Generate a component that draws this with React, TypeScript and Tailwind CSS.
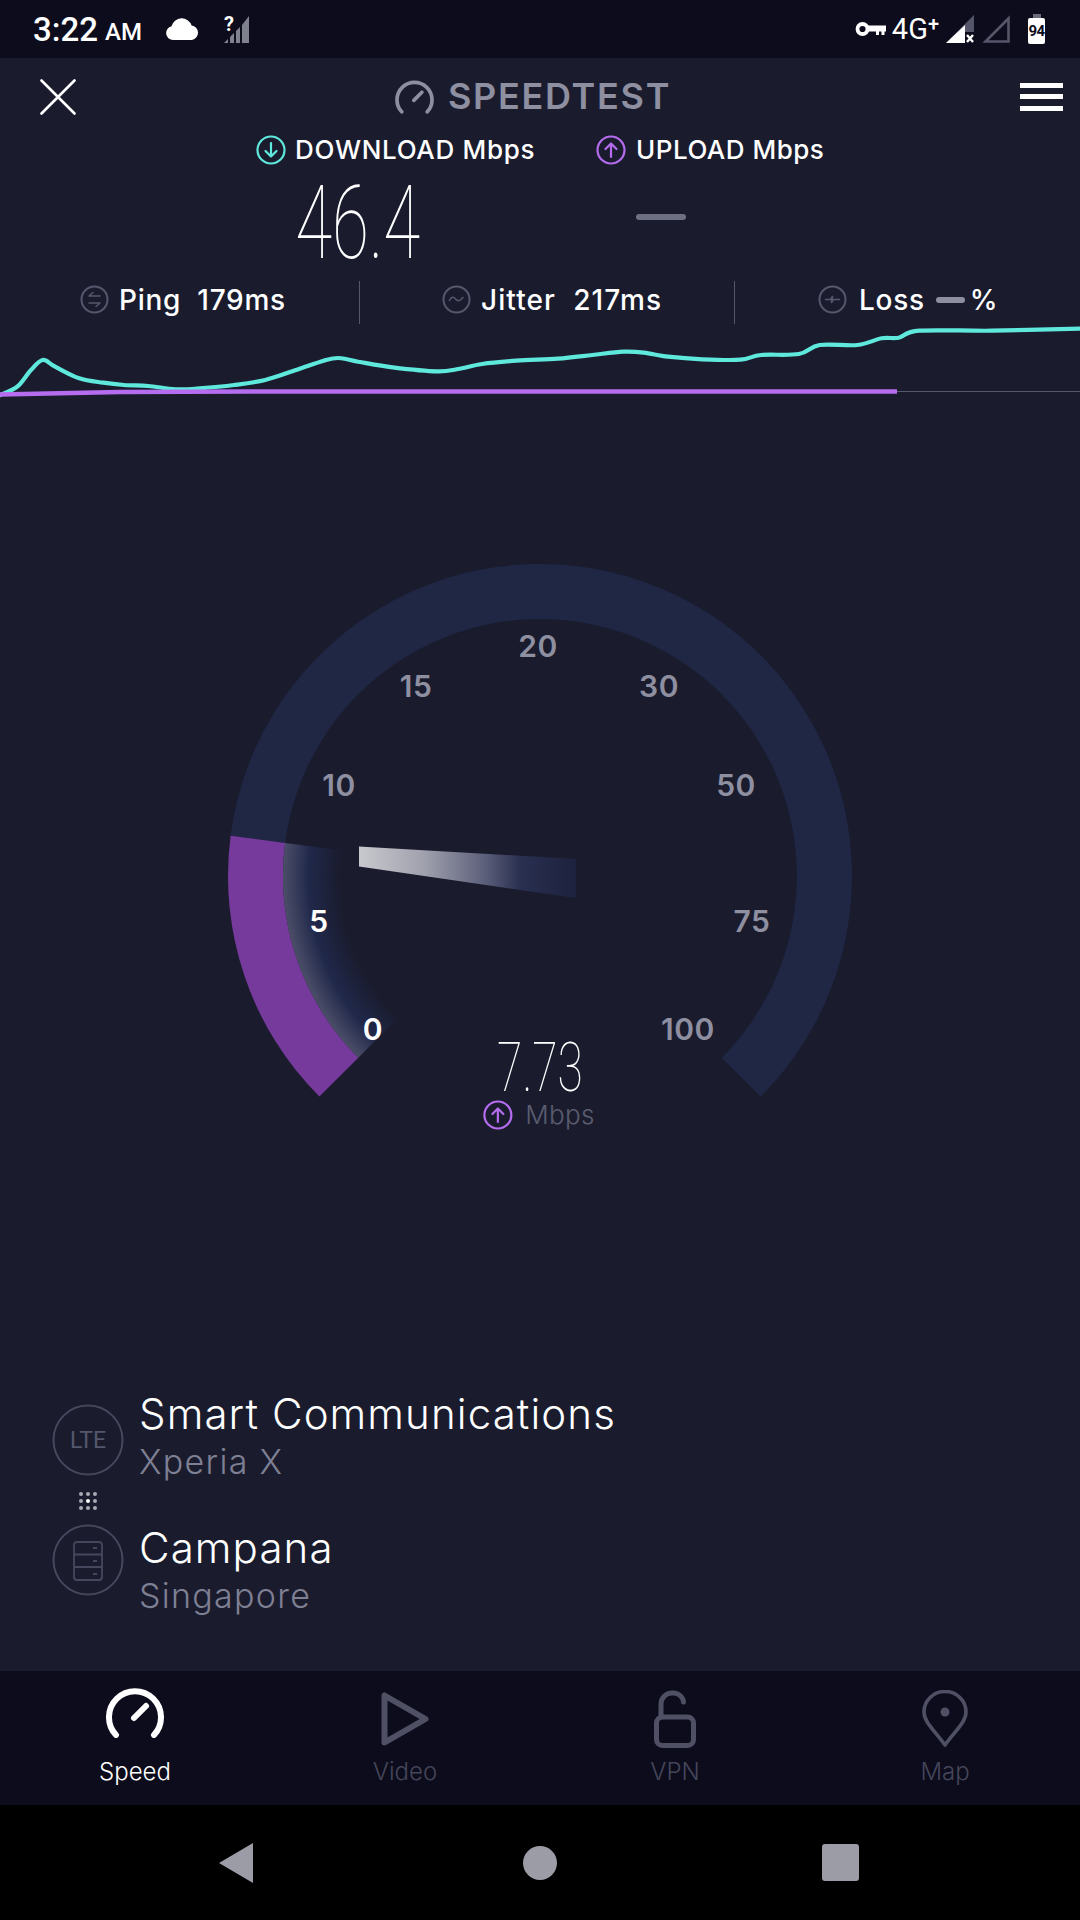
// Speedtest running screen: upload phase, gauge mid-sweep.

const CX = 540;
const CY = 336;

const polar = (r: number, deg: number) => {
  const a = (deg * Math.PI) / 180;
  return `${(CX + r * Math.cos(a)).toFixed(1)} ${(CY + r * Math.sin(a)).toFixed(1)}`;
};

// annular sector, clockwise from a to b
const sector = (inner: number, outer: number, a: number, b: number) => {
  const large = b - a > 180 ? 1 : 0;
  return `M${polar(outer, a)} A${outer} ${outer} 0 ${large} 1 ${polar(outer, b)} L${polar(inner, b)} A${inner} ${inner} 0 ${large} 0 ${polar(inner, a)} Z`;
};

const TRACE: [number, number][] = [
  [0, 675], [25, 650], [45, 600], [62, 570], [80, 590], [115, 625], [150, 638], [180, 645], [215, 648],
  [255, 658], [290, 655], [340, 645], [385, 630], [430, 600], [470, 572], [492, 564], [520, 575],
  [570, 592], [635, 604], [665, 597], [700, 582], [750, 572], [810, 566], [860, 555], [905, 545],
  [935, 548], [970, 560], [1020, 568], [1075, 569], [1105, 555], [1160, 552], [1190, 525], [1245, 525],
  [1280, 505], [1305, 503], [1335, 482], [1440, 482], [1568, 476],
];

// catmull-rom through the samples so the trace doesn't look jagged
const smooth = (pts: [number, number][]) => {
  const p = pts.map(([x, y]) => [x / 1.452, y / 3 - 154]);
  let d = `M${p[0][0].toFixed(1)} ${p[0][1].toFixed(1)}`;
  for (let i = 0; i < p.length - 1; i++) {
    const a = p[Math.max(i - 1, 0)];
    const b = p[i];
    const c = p[i + 1];
    const e = p[Math.min(i + 2, p.length - 1)];
    const c1 = [b[0] + (c[0] - a[0]) / 6, b[1] + (c[1] - a[1]) / 6];
    const c2 = [c[0] - (e[0] - b[0]) / 6, c[1] - (e[1] - b[1]) / 6];
    d += ` C${c1[0].toFixed(1)} ${c1[1].toFixed(1)} ${c2[0].toFixed(1)} ${c2[1].toFixed(1)} ${c[0].toFixed(1)} ${c[1].toFixed(1)}`;
  }
  return d;
};

const TICKS = [
  { label: "20", cls: "left-[538px] top-[106px] text-[#8e8fa0]" },
  { label: "15", cls: "left-[416px] top-[146px] text-[#8e8fa0]" },
  { label: "30", cls: "left-[659px] top-[146px] text-[#8e8fa0]" },
  { label: "10", cls: "left-[339px] top-[245px] text-[#8e8fa0]" },
  { label: "50", cls: "left-[736px] top-[245px] text-[#8e8fa0]" },
  { label: "5", cls: "left-[319px] top-[381px] text-white" },
  { label: "75", cls: "left-[752px] top-[381px] text-[#8e8fa0]" },
  { label: "0", cls: "left-[373px] top-[489px] text-white" },
  { label: "100", cls: "left-[688px] top-[489px] text-[#8e8fa0]" },
];

function ArrowCircle({ up, className }: { up?: boolean; className: string }) {
  return (
    <svg width="30" height="30" viewBox="0 0 30 30" fill="none" stroke="currentColor" strokeWidth="2.2" strokeLinecap="round" strokeLinejoin="round" className={className}>
      <circle cx="15" cy="15" r="13.5" />
      {up ? <path d="M15 22V8.5M9.5 14L15 8.5l5.5 5.5" /> : <path d="M15 8v13.5M9.5 16l5.5 5.5 5.5-5.5" />}
    </svg>
  );
}

function StatIcon({ children }: { children: React.ReactNode }) {
  return (
    <svg width="29" height="29" viewBox="0 0 29 29" fill="none" stroke="#55576c" strokeWidth="2" strokeLinecap="round" strokeLinejoin="round" className="shrink-0">
      <circle cx="14.5" cy="14.5" r="13" />
      {children}
    </svg>
  );
}

function DialIcon({ width, height, stroke, className }: { width: number; height: number; stroke: number; className: string }) {
  return (
    <svg width={width} height={height} viewBox="0 0 58 50" fill="none" stroke="currentColor" strokeWidth={stroke} strokeLinecap="round" className={className}>
      <path d="M10 47A26 26 0 1 1 48 47" />
      <path d="M28 30L40 18" />
    </svg>
  );
}

function ServerRow({ title, sub, shift, children }: { title: string; sub: string; shift: string; children: React.ReactNode }) {
  return (
    <div className="flex h-[72px] items-center">
      <svg width="72" height="72" viewBox="0 0 72 72" fill="none" stroke="#45475c" strokeWidth="2" className="shrink-0">
        <circle cx="36" cy="36" r="34.5" />
        {children}
      </svg>
      <div className={`ml-[15px] flex flex-col ${shift}`}>
        <span className="text-[42px] leading-[54px] font-light tracking-[1.1px] whitespace-nowrap text-white">{title}</span>
        <span className="text-[34px] leading-[42px] font-light tracking-[1.3px] text-[#7f8094]">{sub}</span>
      </div>
    </div>
  );
}

function NavItem({ label, active, children }: { label: string; active?: boolean; children: React.ReactNode }) {
  return (
    <div className="flex flex-1 flex-col items-center">
      <div className="flex h-[64px] items-center">{children}</div>
      <span className={`mt-[6px] text-[24px] leading-[30px] font-light ${active ? "text-white" : "text-[#45465a]"}`}>{label}</span>
    </div>
  );
}

export default function App() {
  return (
    <div className="flex h-[1920px] w-[1080px] flex-col overflow-hidden bg-[#1a1c2e] font-['Inter',sans-serif] text-white">
      {/* status bar */}
      <div className="flex h-[58px] items-center bg-[#0c0c1c] pl-[33px] pr-[35px] font-['Roboto',sans-serif]">
        <span className="text-[33px] leading-none font-medium">3:22</span>
        <span className="ml-[7px] mt-[6px] text-[24px] leading-none font-medium">AM</span>
        <svg width="33" height="22" viewBox="0 0 33 22" fill="white" className="ml-[24px]">
          <path d="M7 22a7 7 0 0 1-1.500-13.800A10.500 10.500 0 0 1 25.600 7.400 7.400 7.400 0 0 1 26 22Z" />
        </svg>
        <div className="relative ml-[25px] h-[28px] w-[25px]">
          <span className="absolute left-0 top-[-3px] text-[20px] leading-[24px] font-bold text-white">?</span>
          <svg width="25" height="28" viewBox="0 0 25 28" fill="#80818f">
            <path d="M0 28L4 24V28ZM6 28V22L10 18V28ZM12 28V16L16 12V28ZM18 28V10L25 1V28Z" />
          </svg>
        </div>
        <svg width="31" height="14" viewBox="0 0 31 14" fill="none" className="ml-auto">
          <circle cx="7.500" cy="7" r="5" stroke="white" strokeWidth="3.800" />
          <path d="M13 3.500H31V9.500H29.500V13H26.500V9.500H24V13H21V9.500H13Z" fill="white" />
        </svg>
        <span className="ml-[6px] flex items-start text-[29px] leading-none font-normal">
          4G<span className="text-[20px] leading-[18px] font-medium">+</span>
        </span>
        <svg width="28" height="28" viewBox="0 0 28 28" className="ml-[7px]">
          <path d="M28 0V17H19V28H0Z" fill="#55566a" />
          <path d="M19 10V28H0Z" fill="white" />
          <path d="M21 20L27 27M27 20L21 27" stroke="white" strokeWidth="2.400" />
        </svg>
        <svg width="28" height="28" viewBox="0 0 28 28" fill="none" className="ml-[8px]">
          <path d="M26.500 3.500V26.500H3.500Z" stroke="#55566a" strokeWidth="2.600" />
        </svg>
        <div className="ml-[18px] flex flex-col items-center">
          <div className="h-[4px] w-[8px] bg-[#6a6b78]" />
          <div className="flex h-[26px] w-[17px] items-center justify-center rounded-[2px] bg-white text-[15px] leading-none font-bold tracking-[-0.5px] text-[#0c0c1c]">
            94
          </div>
        </div>
      </div>

      {/* header */}
      <div className="flex h-[77px] items-center pl-[40px] pr-[17px]">
        <svg width="36" height="36" viewBox="0 0 36 36" stroke="white" strokeWidth="2.600" strokeLinecap="round">
          <path d="M1.500 1.500L34.500 34.500M34.500 1.500L1.500 34.500" />
        </svg>
        <div className="ml-[319px] flex items-center text-[#8e8fa0]">
          <DialIcon width={39} height={34} stroke={5.5} className="" />
          <span className="ml-[14px] mb-[2px] text-[36px] leading-none font-semibold tracking-[1.7px]">SPEEDTEST</span>
        </div>
        <div className="ml-auto flex h-[28px] w-[43px] flex-col justify-between">
          <div className="h-[5px] bg-white" />
          <div className="h-[5px] bg-white" />
          <div className="h-[5px] bg-white" />
        </div>
      </div>

      {/* units */}
      <div className="flex h-[30px] items-center pl-[256px]">
        <ArrowCircle className="text-[#5fe9dd]" />
        <span className="ml-[9px] w-[301px] text-[26px] leading-none font-medium tracking-[0.7px]">DOWNLOAD Mbps</span>
        <ArrowCircle up className="text-[#b56cef]" />
        <span className="ml-[10px] text-[26px] leading-none font-medium tracking-[0.5px]">UPLOAD Mbps</span>
      </div>

      {/* results */}
      <div className="flex h-[116px] items-center pl-[209px]">
        <div className="flex w-[301px] -translate-x-[2px] justify-center">
          <span className="scale-x-[0.66] font-['Roboto',sans-serif] text-[102px] leading-none font-thin">46.4</span>
        </div>
        <div className="flex w-[301px] justify-center">
          <div className="mb-[13px] h-[6px] w-[50px] rounded-full bg-[#6e7084]" />
        </div>
      </div>

      {/* ping, jitter, loss */}
      <div className="flex h-[43px] items-center text-[28px] font-medium tracking-[0.7px]">
        <div className="flex h-full w-[360px] items-center border-r border-r-[#55576a] pb-[6px] pl-[80px]">
          <StatIcon>
            <path d="M20 11H9l4-3.500M9 18h11l-4 3.500" strokeWidth="1.600" />
          </StatIcon>
          <span className="ml-[10px] whitespace-pre leading-none">Ping  179ms</span>
        </div>
        <div className="flex h-full w-[375px] items-center border-r border-r-[#55576a] pb-[6px] pl-[82px]">
          <StatIcon>
            <path d="M7.500 15.500c2-4 4-4 6-1.500s4 2.500 7.500-1.500" strokeWidth="1.600" />
          </StatIcon>
          <span className="ml-[10px] whitespace-pre leading-none tracking-[1.1px]">Jitter  217ms</span>
        </div>
        <div className="flex h-full flex-1 items-center pb-[6px] pl-[83px]">
          <StatIcon>
            <path d="M7.500 14.500h5l2-3-1 6 2-3h6" strokeWidth="1.600" />
          </StatIcon>
          <span className="ml-[12px] leading-none">Loss</span>
          <div className="ml-[11px] h-[6px] w-[29px] rounded-full bg-[#8e8fa0]" />
          <span className="ml-[5px] leading-none tracking-normal">%</span>
        </div>
      </div>

      {/* live graph */}
      <svg width="1080" height="76" viewBox="0 0 1080 76" fill="none" className="shrink-0">
        <path d="M897 67.500H1080" stroke="#55576a" strokeWidth="1.200" />
        <path d={smooth(TRACE)} stroke="#5fe9dd" strokeWidth="4.200" strokeLinejoin="round" strokeLinecap="round" />
        <path d="M0 70.500L120 68L250 67.500H897" stroke="#b56cef" strokeWidth="4.400" />
      </svg>

      {/* gauge */}
      <div className="relative mt-[140px] h-[620px] w-[1080px] shrink-0">
        <svg width="1080" height="620" viewBox="0 0 1080 620" className="absolute inset-0">
          <defs>
            <radialGradient id="sweep" gradientUnits="userSpaceOnUse" cx={CX} cy={CY} r="257">
              <stop offset="0.78" stopColor="#20284a" stopOpacity="0" />
              <stop offset="0.9" stopColor="#20284a" />
              <stop offset="1" stopColor="#4c4e68" />
            </radialGradient>
            <linearGradient id="needle" gradientUnits="userSpaceOnUse" x1="359" y1="0" x2="576" y2="0">
              <stop offset="0" stopColor="#c8c8ce" />
              <stop offset="0.3" stopColor="#a0a1ad" />
              <stop offset="0.58" stopColor="#5c5f7a" />
              <stop offset="0.74" stopColor="#2a3050" />
              <stop offset="1" stopColor="#20284a" stopOpacity="0.55" />
            </linearGradient>
          </defs>
          <path d={sector(257, 312, 187.4, 405)} fill="#202745" />
          <path d={sector(257, 312, 135, 187.4)} fill="#763a9c" />
          <path d={sector(195, 257, 135, 187.4)} fill="url(#sweep)" />
          <path d="M359 306.600L359 326.500L576 358L576 319Z" fill="url(#needle)" />
        </svg>
        {TICKS.map((t) => (
          <span key={t.label} className={`absolute -translate-x-1/2 -translate-y-1/2 text-[30px] leading-none font-semibold tracking-[0.5px] ${t.cls}`}>
            {t.label}
          </span>
        ))}
        <div className="absolute left-[540px] top-[499px] flex -translate-x-1/2 flex-col items-center">
          <span className="scale-x-[0.68] font-['Roboto',sans-serif] text-[68px] leading-[58px] font-thin">7.73</span>
          <div className="mt-[3px] -translate-x-[1px] flex items-center">
            <ArrowCircle up className="text-[#b56cef]" />
            <span className="ml-[12px] text-[26px] leading-none font-light tracking-[0.3px] text-[#5a5c70]">Mbps</span>
          </div>
        </div>
      </div>

      {/* carrier and server */}
      <div className="mt-[244px] flex flex-col pl-[52px]">
        <ServerRow title="Smart Communications" sub="Xperia X" shift="-translate-y-[5px]">
          <text x="36" y="44" textAnchor="middle" fill="#55576c" stroke="none" fontFamily="Roboto" fontSize="23">LTE</text>
        </ServerRow>
        <div className="mb-[14px] mt-[16px] grid w-[18px] translate-x-[27px] grid-cols-3 gap-[3px]">
          {[0, 1, 2, 3, 4, 5, 6, 7, 8].map((i) => (
            <div key={i} className={`h-[4px] w-[4px] rounded-full ${i === 4 ? "bg-white" : "bg-[#a8a9b4]"}`} />
          ))}
        </div>
        <ServerRow title="Campana" sub="Singapore" shift="translate-y-[9px]">
          <rect x="22" y="18" width="28" height="38" rx="3" strokeWidth="1.800" />
          <path d="M22 30.500H50M22 43H50M41 24h4M41 37h4M41 50h4" strokeWidth="1.800" />
        </ServerRow>
      </div>

      {/* tab bar */}
      <div className="mt-auto flex h-[134px] bg-[#0c0c1c] pt-[16px]">
        <NavItem label="Speed" active>
          <DialIcon width={58} height={50} stroke={6} className="-translate-y-[6px] text-white" />
        </NavItem>
        <NavItem label="Video">
          <svg width="48" height="54" viewBox="0 0 48 54" fill="none" stroke="#4f5064" strokeWidth="6" strokeLinejoin="round">
            <path d="M3.500 3.500V50.500L44.500 27Z" />
          </svg>
        </NavItem>
        <NavItem label="VPN">
          <svg width="42" height="58" viewBox="0 0 42 58" fill="none" stroke="#4f5064" strokeWidth="5" strokeLinecap="round">
            <rect x="2.500" y="27" width="37" height="28.500" rx="6" />
            <path d="M7 27V14A11 11 0 0 1 18 3h2a10 10 0 0 1 9.500 9" />
          </svg>
        </NavItem>
        <NavItem label="Map">
          <svg width="46" height="58" viewBox="0 0 46 58" fill="none" stroke="#4f5064" strokeWidth="3.600" strokeLinejoin="round">
            <path d="M23 55C12 40 2 32 2 22A21 20.500 0 0 1 44 22C44 32 34 40 23 55Z" />
            <circle cx="23" cy="22" r="4.500" fill="#4f5064" stroke="none" />
          </svg>
        </NavItem>
      </div>

      {/* system navigation */}
      <div className="flex h-[115px] items-start bg-black pl-[219px] pt-[38px]">
        <svg width="34" height="40" viewBox="0 0 34 40" fill="#9b9ca6">
          <path d="M34 0V40L0 20Z" />
        </svg>
        <div className="ml-[270px] mt-[3px] h-[34px] w-[34px] rounded-full bg-[#9b9ca6]" />
        <div className="ml-[265px] mt-[1px] h-[37px] w-[37px] rounded-[3px] bg-[#9b9ca6]" />
      </div>
    </div>
  );
}
